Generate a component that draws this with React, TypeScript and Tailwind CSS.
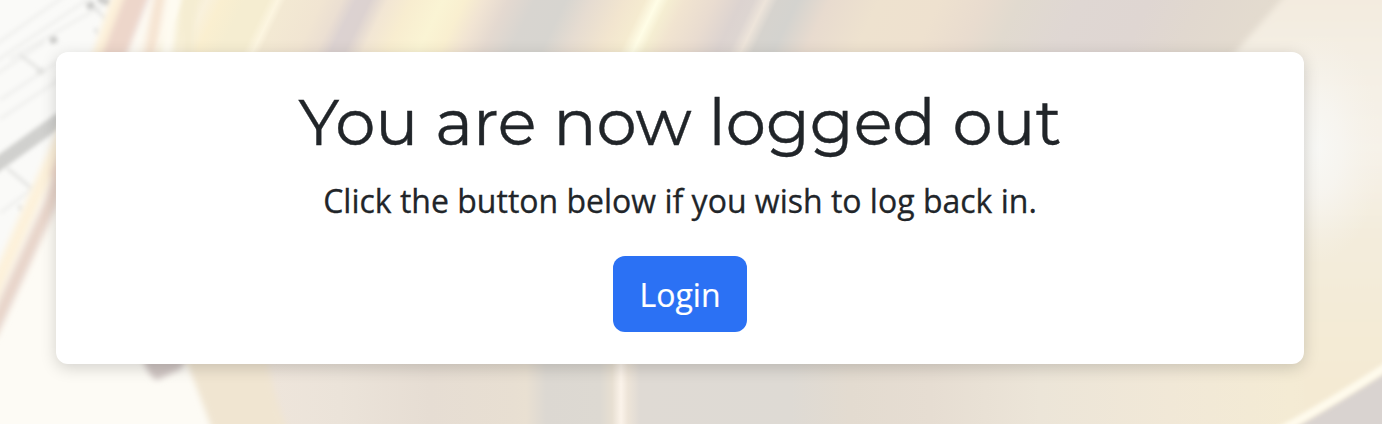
type Stop = [number, string];

const upperStops: Stop[] = [
  [160, '#f6e3d0'], [166, '#faf0df'], [172, '#fefaf0'], [179, '#fefcf1'], [186, '#f5edd0'], [198, '#f6eed4'],
  [207, '#f9f1dc'], [222, '#faefd0'], [245, '#f5edd1'], [268, '#f5edd1'], [278, '#fcf5e0'], [286, '#f3e9d3'],
  [322, '#f1e5d2'], [342, '#ebdfd2'], [356, '#dcd2d1'], [370, '#dcd2d0'], [388, '#f2e6d4'], [412, '#f8edd0'],
  [443, '#faf4d4'], [465, '#f9efd0'], [485, '#f1e4d3'], [508, '#e4d9d0'], [535, '#d8d5d0'], [566, '#d7d5d0'],
  [592, '#e6dcd1'], [625, '#f2e5cf'], [645, '#f5ebd0'], [658, '#fffde6'], [669, '#f5eed2'], [685, '#f1e4d0'],
  [715, '#e9dcd0'], [742, '#dcd3d0'], [754, '#ddd5d1'], [766, '#ede4da'], [778, '#d6d3ce'], [798, '#d4d3cf'],
  [830, '#e8dbcf'], [880, '#eee2cf'], [940, '#eee1cf'], [985, '#e9dccf'], [1020, '#e1dacf'], [1080, '#dfd7d3'],
  [1150, '#dfd6d2'], [1200, '#e1d8cf'], [1290, '#e4dccf'],
];

const lowerStops: Stop[] = [
  [270, '#eee5db'], [340, '#ebe3d9'], [430, '#e6ddd3'], [515, '#e8dfd2'], [526, '#e9e0d2'], [546, '#dcd8d2'],
  [600, '#ddd9d2'], [612, '#e7dfd2'], [621, '#fbf3ea'], [628, '#ede4d8'], [640, '#dfdad4'], [790, '#dedad4'],
  [850, '#e3dbd0'], [930, '#e6ddd2'], [1040, '#ece5d8'], [1170, '#f1e8d7'], [1290, '#f4ebd4'], [1382, '#f3e8d2'],
];

function Stops({ list }: { list: Stop[] }) {
  return (
    <>
      {list.map(([x, color]) => (
        <stop key={x} offset={x / 1382} stopColor={color} />
      ))}
    </>
  );
}

function Backdrop() {
  return (
    <svg className="absolute inset-0 h-full w-full" viewBox="0 0 1382 424" preserveAspectRatio="none" aria-hidden="true">
      <defs>
        <linearGradient id="upper" gradientUnits="userSpaceOnUse" x1="0" y1="0" x2="1382" y2="0" gradientTransform="skewX(-26)">
          <Stops list={upperStops} />
        </linearGradient>
        <linearGradient id="lower" gradientUnits="userSpaceOnUse" x1="0" y1="0" x2="1382" y2="0">
          <Stops list={lowerStops} />
        </linearGradient>
        <linearGradient id="side" gradientUnits="userSpaceOnUse" x1="0" y1="0" x2="0" y2="424">
          <stop offset="0" stopColor="#f3ebdf" />
          <stop offset="0.15" stopColor="#f4efe4" />
          <stop offset="0.35" stopColor="#f6f2e9" />
          <stop offset="0.55" stopColor="#f3ecdc" />
          <stop offset="0.9" stopColor="#f4ead3" />
        </linearGradient>
        <radialGradient id="glow">
          <stop offset="0" stopColor="#f8f8f5" />
          <stop offset="0.4" stopColor="#f7f5f0" stopOpacity="0.9" />
          <stop offset="1" stopColor="#f6f2e9" stopOpacity="0" />
        </radialGradient>
        <filter id="soft2" x="-30%" y="-30%" width="160%" height="160%"><feGaussianBlur stdDeviation="2" /></filter>
        <filter id="soft3" x="-30%" y="-30%" width="160%" height="160%"><feGaussianBlur stdDeviation="3" /></filter>
      </defs>
      <rect width="1382" height="424" fill="#fdfbf5" />
      <path d="M0 0H150L0 330Z" fill="#fafaf8" />
      <g filter="url(#soft2)" fill="none">
        <path d="M-8 168L62 118" stroke="#d0d0ce" strokeWidth="14" />
        <path d="M-5 45L70 -8M-5 62L94 -5M10 59L103 5M0 100L60 60M0 119L60 79M-5 75L45 42M0 213L50 176" stroke="#efefed" strokeWidth="3" />
        <path d="M20 55L43 72M7 168L31 188M89 3L106 19" stroke="#e3e3e1" strokeWidth="3" />
        <path d="M98 -2L110 3M50 41L57 39M87 7L94 4" stroke="#cbcbc9" strokeWidth="7" />
        <path d="M37 73L44 70M19 209L22 207M95 32L98 30" stroke="#e2e2e0" strokeWidth="6" />
      </g>
      <path d="M172 0H1382V180H100L148 52Z" fill="url(#upper)" />
      <g filter="url(#soft3)" fill="none">
        <path d="M121 -10L98 58L48 168L-10 300" stroke="#fdf1da" strokeWidth="13" />
        <path d="M62 168L50 205L-10 336" stroke="#e8d5ca" strokeWidth="13" />
        <path d="M143 -20L113 58L60 180" stroke="#edd6ca" strokeWidth="23" />
        <path d="M156 5L136 65" stroke="#fdf8ee" strokeWidth="8" />
        <path d="M161 -10L148 65" stroke="#f6e4d2" strokeWidth="11" />
        <path d="M174 -10L165 65" stroke="#fefbf1" strokeWidth="14" />
        <path d="M188 -10L188 65" stroke="#f5edd2" strokeWidth="12" />
      </g>
      <path d="M1289 -9L1227 62V470H1430V-9Z" fill="url(#side)" filter="url(#soft3)" />
      <ellipse cx="1316" cy="148" rx="66" ry="115" fill="url(#glow)" />
      <path d="M252 364H1304V424H280Z" fill="url(#lower)" />
      <g filter="url(#soft3)">
        <path d="M180 345H265Q272 395 290 435H214Q200 395 180 345Z" fill="#f0e5d1" />
        <path d="M138 345H194L181 369 157 380Q147 377 138 345Z" fill="#cfc5c2" />
        <path d="M1280 436L1400 363V436Z" fill="#d9d3d0" />
      </g>
      <path d="M1276 433Q1338 399 1392 363" fill="none" stroke="#fffbed" strokeWidth="8" filter="url(#soft2)" />
    </svg>
  );
}

export default function App() {
  return (
    <main className="relative h-[424px] w-full overflow-hidden pt-[52px] pl-14 font-['Open_Sans','Noto_Sans',sans-serif] text-[#212529]">
      <Backdrop />
      <section className="relative flex h-[312px] w-[1248px] flex-col items-center rounded-xl bg-white pt-8 shadow-[0_4px_16px_rgba(0,0,0,0.17)]">
        <h1 className="text-[64px] leading-[77px] font-normal whitespace-nowrap font-['Montserrat','Inter',sans-serif] [-webkit-text-stroke:0.4px_#212529]">
          You are now logged out
        </h1>
        <p className="mt-4 text-[32px] leading-[48px] whitespace-nowrap [-webkit-text-stroke:0.3px_#212529]">
          Click the button below if you wish to log back in.
        </p>
        <button type="button" className="mt-[31px] flex h-[76px] w-[134px] items-center justify-center rounded-xl bg-[#2b71f4] pt-px text-[32px] leading-[48px] text-white [-webkit-text-stroke:0.2px_white]">
          Login
        </button>
      </section>
    </main>
  );
}
